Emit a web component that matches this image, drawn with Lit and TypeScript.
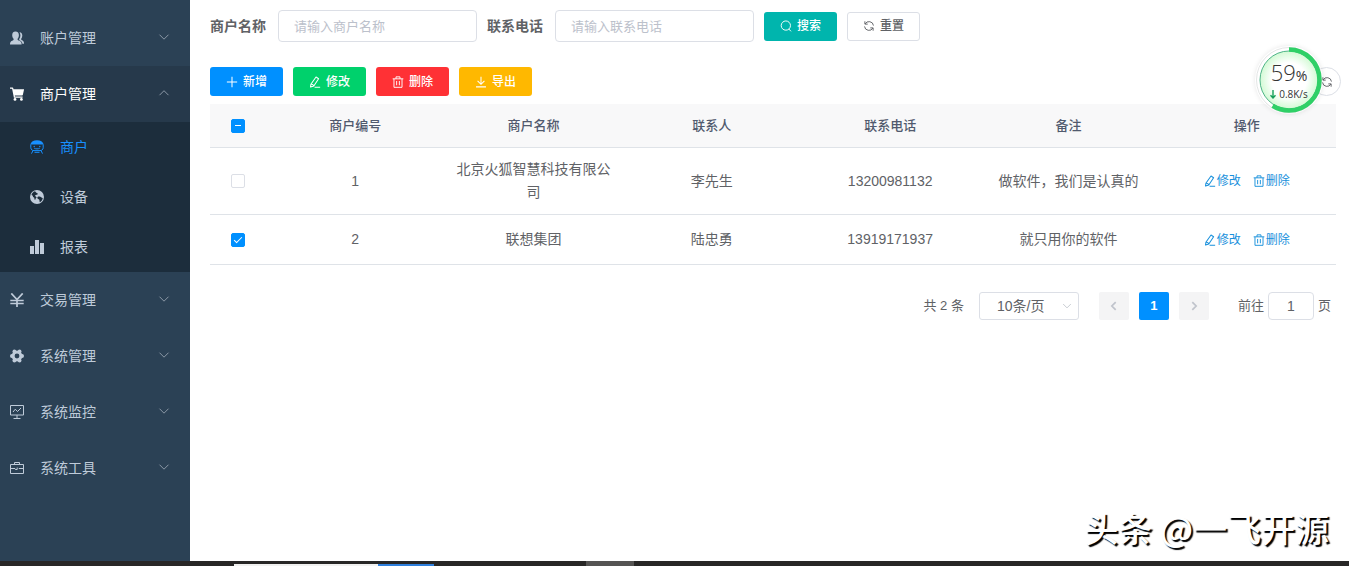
import { LitElement, html, css, svg, nothing } from "lit";
import { customElement, property, state } from "lit/decorators.js";

const icons: Record<string, unknown> = {
  user: svg`<g fill="currentColor"><path d="M5.500.5C7.700.5 9 2.100 8.900 4.400 8.800 5.900 8.200 6.900 7.600 7.700v1.100c0 .5 3 1.100 3.600 2.400.4.800.4 1.600.4 2.300H0c0-.7 0-1.500.4-2.300C1 9.900 3.600 9.300 3.600 8.800V7.700C2.900 6.900 2.300 5.900 2.200 4.400 2.100 2.100 3.300.5 5.500.5z"/><path d="M9.500 1.200c1.900.1 2.900 1.500 2.800 3.600-.1 1.300-.5 2.200-1.100 2.900v.9c0 .5 2.100 1 2.500 2.200.3.700.3 1.400.3 2h-1.600c-.1-1.900-1.500-3-3.200-3.600V8.100c.8-1 1.200-2.100 1.200-3.500 0-1.400-.3-2.500-.9-3.400z"/></g>`,
  cart: svg`<g fill="currentColor"><path d="M0 .5h2.600c.3 0 .5.200.6.500L3.500 2.300H13.800c.2 0 .3.200.2.400L12.800 8c-.1.300-.3.500-.6.500H4.800l.2 1h7.600v1.300H3.900L2.100 1.800H0z"/><circle cx="5" cy="12.400" r="1.400"/><circle cx="11.400" cy="12.400" r="1.400"/></g>`,
  train: svg`<path fill="currentColor" d="M.3 4.600C1 1.700 3.500.2 7 .2s6 1.500 6.700 4.400z"/><g fill="none" stroke="currentColor" stroke-width="1"><path d="M.8 4.500v3.200C.9 9.700 2.300 10.600 4 10.600h6c1.700 0 3.100-.9 3.200-2.900V4.500M4.300 8.300c1.600.8 3.800.8 5.400 0M3 10.600l-1.500 3M11 10.600l1.500 3M4.500 12.300h5"/></g><circle cx="4.200" cy="6.500" r=".7" fill="currentColor"/><circle cx="9.800" cy="6.500" r=".7" fill="currentColor"/>`,
  globe: svg`<path fill="currentColor" fill-rule="evenodd" d="M7 0a7 7 0 1 1 0 14A7 7 0 0 1 7 0zM5 1.300C3.200 1.900 1.900 3.300 1.500 5c1 .2 1.700 1 1.500 2 .9.200 1.500.8 1.400 1.700-.1.600.3 1 .7 1.300.5-1.200.6-2 1.600-2.600C5.500 6.500 5 6 5.300 5.100c.8-.3 2-.2 2.600-1.200C7.400 3.100 6.200 3 5 1.300zM9.500 6.600c-1.300-.3-2.300.3-2.200 1.500.1 1 1.400 1.200 2 1.600.4.900 0 1.900.6 2.600 1.600-.8 2.600-2.400 2.900-4.200-1 .2-1.900-1.200-3.300-1.500z"/>`,
  bars: svg`<path fill="currentColor" d="M0 6h4v8H0zM5 0h4v14H5zM10 3h4v11h-4z"/>`,
  yen: svg`<path fill="none" stroke="currentColor" stroke-width="1.700" d="M1.300.4 7 6.500 12.700.4M7 6.500V14"/><path fill="none" stroke="currentColor" stroke-width="1.300" d="M.3 7.500h13.400M.3 10.500h13.400"/>`,
  gear: svg`<circle cx="7" cy="7" r="3.900" fill="none" stroke="currentColor" stroke-width="3"/><g fill="currentColor"><circle cx="1.900" cy="7" r="1.900"/><circle cx="12.100" cy="7" r="1.900"/><circle cx="4.400" cy="2.500" r="1.900"/><circle cx="9.600" cy="2.500" r="1.900"/><circle cx="4.400" cy="11.500" r="1.900"/><circle cx="9.600" cy="11.500" r="1.900"/></g>`,
  monitor: svg`<path fill="none" stroke="currentColor" d="M.5.5h13v9.500H.5zM7 10v3M3.500 13.500h7M3 7l2.300-2.800L7.500 6.500 11 3"/>`,
  toolbox: svg`<path fill="none" stroke="currentColor" d="M.5 3.500h13v9H.5zM4.500 3.500v-2h5v2M.5 7.500h4.700M8.800 7.500h4.700M5.200 8.500h2V6.500"/>`,
  down: svg`<path fill="none" stroke="currentColor" d="M2.500 4.700 7 9.200l4.500-4.500"/>`,
  up: svg`<path fill="none" stroke="currentColor" d="M2.500 9.200 7 4.700l4.500 4.500"/>`,
  left: svg`<path fill="none" stroke="currentColor" stroke-width="2" d="M9 2.500 4.500 7 9 11.500"/>`,
  right: svg`<path fill="none" stroke="currentColor" stroke-width="2" d="M5 2.500 9.500 7 5 11.500"/>`,
  search: svg`<g fill="none" stroke="currentColor" stroke-width="1.100"><circle cx="6.800" cy="6.500" r="5.400"/><path d="m10.300 10.500 2.500 2.700"/></g>`,
  refresh: svg`<g fill="none" stroke="currentColor" stroke-width="1.100"><path d="M2.200 1.500v3.300h3.300M2.400 4.700A5.200 5.200 0 0 1 12.200 6.500M11.800 12.500V9.200H8.500M11.600 9.300A5.200 5.200 0 0 1 1.800 7.500"/></g>`,
  plus: svg`<path fill="none" stroke="currentColor" stroke-width="1.200" d="M7 1v12M1 7h12"/>`,
  edit: svg`<path fill="none" stroke="currentColor" stroke-width="1.200" stroke-linejoin="round" d="M8.200 1.200 11.200 3.200 5.600 11.600 1.800 12.900 2.200 9.600zM2.200 9.600c1.700-.3 2.900.6 3.400 2M6.500 13.100H13"/>`,
  trash: svg`<path fill="none" stroke="currentColor" stroke-width="1.100" d="M.8 3.300h12.400M2.300 3.300v9.900h9.400V3.300M4.700 3.300V1h4.600v2.300M5.400 5.800v5M8.600 5.800v5"/>`,
  download: svg`<path fill="none" stroke="currentColor" stroke-width="1.200" d="M7 1v8.500M3 5.700l4 4 4-4M1.200 12.700h11.600"/>`,
};

const icon = (name: string, size = 14) => html`<svg
  class="icon" width=${size} height=${size} viewBox="0 0 14 14" aria-hidden="true">${icons[name]}</svg>`;

const fontStack = css`"Liberation Sans", "Noto Sans CJK SC", sans-serif`;

interface MenuEntry {
  icon: string;
  label: string;
  open?: boolean;
  children?: { icon: string; label: string; active?: boolean }[];
}

@customElement("side-menu")
class SideMenu extends LitElement {
  static styles = css`
    :host {
      display: block;
      flex: none;
      width: 190px;
      padding-top: 10px;
      box-sizing: border-box;
      background: #2b4155;
      color: #bfcbd9;
      font: 14px/20px ${fontStack};
    }
    .icon { display: block; flex: none; }
    .title {
      display: flex;
      align-items: center;
      width: 100%;
      height: 56px;
      padding: 0 19px 0 10px;
      border: 0;
      background: none;
      color: inherit;
      font: inherit;
      text-align: left;
      cursor: pointer;
    }
    .title.open { background: #26394b; color: #fff; }
    .label { flex: 1; padding-left: 16px; }
    .arrow { color: #8b98a6; padding-bottom: 2px; }
    .sub { background: #1c2d3c; }
    .link {
      display: flex;
      align-items: center;
      height: 50px;
      padding-left: 30px;
      color: inherit;
      text-decoration: none;
    }
    .link.active { color: #1890ff; }
  `;

  @state() private entries: MenuEntry[] = [
    { icon: "user", label: "账户管理" },
    {
      icon: "cart",
      label: "商户管理",
      open: true,
      children: [
        { icon: "train", label: "商户", active: true },
        { icon: "globe", label: "设备" },
        { icon: "bars", label: "报表" },
      ],
    },
    { icon: "yen", label: "交易管理" },
    { icon: "gear", label: "系统管理" },
    { icon: "monitor", label: "系统监控" },
    { icon: "toolbox", label: "系统工具" },
  ];

  private toggle(entry: MenuEntry) {
    this.entries = this.entries.map((e) => (e === entry ? { ...e, open: !e.open } : e));
  }

  render() {
    return html`<nav>
      ${this.entries.map(
        (e) => html`
          <button class="title ${e.open ? "open" : ""}" aria-expanded=${e.open ? "true" : "false"} @click=${() => this.toggle(e)}>
            ${icon(e.icon)}<span class="label">${e.label}</span>
            <span class="arrow">${icon(e.open ? "up" : "down", 14)}</span>
          </button>
          ${e.open && e.children
            ? html`<div class="sub">
                ${e.children.map(
                  (c) => html`<a class="link ${c.active ? "active" : ""}" href="#">${icon(c.icon)}<span class="label">${c.label}</span></a>`
                )}
              </div>`
            : nothing}
        `
      )}
    </nav>`;
  }
}

@customElement("speed-ball")
class SpeedBall extends LitElement {
  @property({ type: Number }) percent = 59;
  @property() rate = "0.8K/s";

  static styles = css`
    :host { display: grid; width: 68px; height: 68px; border-radius: 50%; box-shadow: 0 0 5px rgba(0, 0, 0, 0.1); font-family: "Open Sans", "Noto Sans", sans-serif; color: #333; }
    .ring, .text { grid-area: 1 / 1; }
    .text { display: flex; flex-direction: column; align-items: center; padding-top: 14px; }
    .value { font-size: 22px; line-height: 24px; font-weight: 300; }
    .unit { font-size: 14px; font-weight: 400; }
    .rate { display: flex; align-items: center; gap: 3px; font-size: 10px; line-height: 12px; }
  `;

  render() {
    return html`
      <svg class="ring" width="68" height="68" viewBox="0 0 68 68" aria-hidden="true">
        <defs>
          <radialGradient id="glow">
            <stop offset="0.6" stop-color="#ffffff" />
            <stop offset="1" stop-color="#d2fad4" />
          </radialGradient>
        </defs>
        <circle cx="34" cy="34" r="32.500" fill="#fff" stroke="#e3e5e5" />
        <circle cx="34" cy="34" r="29" fill="url(#glow)" stroke="#4fb488" />
        <circle cx="34" cy="34" r="30.500" fill="none" stroke="#2fd067" stroke-width="4.500"
          pathLength="100" stroke-dasharray="${this.percent} 100" transform="rotate(-90 34 34)" />
      </svg>
      <div class="text">
        <span class="value">${this.percent}<span class="unit">%</span></span>
        <span class="rate">
          <svg width="6" height="9" viewBox="0 0 6 9" aria-hidden="true"><path d="M3 0v8M.5 5.200 3 8l2.500-2.800" fill="none" stroke="#15a05a" stroke-width="1.400" /></svg>
          ${this.rate}
        </span>
      </div>
    `;
  }
}

interface Merchant {
  id: number;
  name: string;
  contact: string;
  phone: string;
  note: string;
  checked: boolean;
}

@customElement("merchant-page")
class MerchantPage extends LitElement {
  static styles = css`
    :host {
      display: block;
      flex: 1;
      min-width: 0;
      box-sizing: border-box;
      padding: 10px 8px 0 20px;
      background: #fff;
      color: #606266;
      font: 14px/20px ${fontStack};
    }
    .icon { display: block; flex: none; }
    .search { display: flex; align-items: center; gap: 10px; height: 32px; }
    .field { display: flex; align-items: center; gap: 12px; }
    .field label { font-weight: 700; }
    .field input {
      box-sizing: border-box;
      width: 199px;
      height: 32px;
      padding: 0 15px;
      border: 1px solid #dcdfe6;
      border-radius: 4px;
      font: 13px/20px ${fontStack};
      color: inherit;
    }
    input::placeholder { color: #bcc1cb; opacity: 1; }
    .btn {
      display: inline-flex;
      align-items: center;
      justify-content: center;
      gap: 5px;
      box-sizing: border-box;
      width: 73px;
      height: 29px;
      padding: 0;
      border: 0;
      border-radius: 3px;
      font: 500 12px/16px ${fontStack};
      color: #fff;
      cursor: pointer;
    }
    .teal { background: #00b5ad; }
    .plain { background: #fff; color: #606266; border: 1px solid #dcdfe6; }
    .blue { background: #0090ff; }
    .green { background: #00d16c; }
    .red { background: #ff3135; }
    .amber { background: #ffb800; }
    .tools { display: flex; gap: 10px; margin: 25px 0 8px; position: relative; }
    .round {
      display: flex;
      align-items: center;
      justify-content: center;
      box-sizing: border-box;
      width: 29px;
      height: 29px;
      margin-left: auto;
      padding: 0;
      border: 1px solid #dcdfe6;
      border-radius: 50%;
      background: #fff;
      color: #606266;
    }
    .ball { position: absolute; right: 18px; top: -21px; }
    .list { padding-right: 5px; }
    table { width: 100%; border-collapse: separate; border-spacing: 0; table-layout: fixed; }
    .pick { width: 56px; }
    th, td { box-sizing: border-box; padding: 10px; border-bottom: 1px solid #dfe3e8; text-align: center; font-weight: 400; line-height: 23px; }
    th { height: 44px; background: #f8f8f9; color: #515a6e; font-size: 13px; font-weight: 500; }
    td { height: 50px; }
    .box {
      appearance: none;
      display: block;
      box-sizing: border-box;
      width: 14px;
      height: 14px;
      margin: 0 auto;
      border: 1px solid #dcdfe6;
      border-radius: 2px;
      background: #fff;
    }
    .box:checked, .box:indeterminate { border-color: #0090ff; background: #0090ff; }
    .box:checked::after {
      content: "";
      display: block;
      width: 3px;
      height: 7px;
      margin: 1px 0 0 4px;
      border: solid #fff;
      border-width: 0 1px 1px 0;
      transform: rotate(45deg);
    }
    .box:indeterminate::after { content: ""; display: block; width: 6px; height: 1px; margin: 5px 3px; background: #fff; }
    .ops { display: flex; justify-content: center; gap: 12px; }
    .op {
      display: flex;
      align-items: center;
      gap: 1px;
      padding: 0;
      border: 0;
      background: none;
      color: #1890dc;
      font: 12px/16px ${fontStack};
      cursor: pointer;
    }
    .pager { display: flex; align-items: center; justify-content: flex-end; gap: 10px; height: 28px; margin-top: 27px; padding-right: 5px; font-size: 13px; }
    .size { display: grid; align-items: center; width: 100px; margin: 0 10px 0 5px; }
    .size select {
      grid-area: 1 / 1;
      appearance: none;
      box-sizing: border-box;
      height: 28px;
      padding: 0 17px;
      border: 1px solid #dcdfe6;
      border-radius: 3px;
      background: #fff;
      color: #606266;
      font: 14px/20px ${fontStack};
    }
    .size .icon { grid-area: 1 / 1; justify-self: end; margin-right: 6px; color: #c0c4cc; pointer-events: none; }
    .page {
      display: flex;
      align-items: center;
      justify-content: center;
      width: 30px;
      height: 28px;
      padding: 0;
      border: 0;
      border-radius: 2px;
      background: #f4f4f5;
      color: #c0c4cc;
      font: 700 13px/20px ${fontStack};
    }
    .page.current { background: #0090ff; color: #fff; }
    .jump { display: flex; align-items: center; margin-left: 19px; }
    .jump label { display: flex; align-items: center; gap: 4px; }
    .jump input {
      box-sizing: border-box;
      width: 46px;
      height: 28px;
      padding: 0 3px;
      border: 1px solid #dcdfe6;
      border-radius: 4px;
      text-align: center;
      color: #606266;
      font: 14px/20px ${fontStack};
    }
  `;

  @state() private rows: Merchant[] = [
    { id: 1, name: "北京火狐智慧科技有限公司", contact: "李先生", phone: "13200981132", note: "做软件，我们是认真的", checked: false },
    { id: 2, name: "联想集团", contact: "陆忠勇", phone: "13919171937", note: "就只用你的软件", checked: true },
  ];

  private toggleRow(row: Merchant) {
    this.rows = this.rows.map((r) => (r === row ? { ...r, checked: !r.checked } : r));
  }

  private toggleAll(e: Event) {
    const checked = (e.target as HTMLInputElement).checked;
    this.rows = this.rows.map((r) => ({ ...r, checked }));
  }

  render() {
    const count = this.rows.filter((r) => r.checked).length;
    const all = count === this.rows.length;
    return html`
      <form class="search" @submit=${(e: Event) => e.preventDefault()}>
        <div class="field"><label for="name">商户名称</label><input id="name" placeholder="请输入商户名称" /></div>
        <div class="field"><label for="phone">联系电话</label><input id="phone" placeholder="请输入联系电话" /></div>
        <button class="btn teal">${icon("search", 12)}搜索</button>
        <button class="btn plain" type="reset">${icon("refresh", 12)}重置</button>
      </form>

      <div class="tools">
        <button class="btn blue">${icon("plus", 12)}新增</button>
        <button class="btn green">${icon("edit", 12)}修改</button>
        <button class="btn red">${icon("trash", 12)}删除</button>
        <button class="btn amber">${icon("download", 12)}导出</button>
        <button class="round" aria-label="刷新">${icon("refresh", 12)}</button>
        <speed-ball class="ball"></speed-ball>
      </div>

      <div class="list">
        <table>
          <thead>
            <tr>
              <th class="pick">
                <input class="box" type="checkbox" aria-label="全选" .checked=${all} .indeterminate=${count > 0 && !all} @change=${this.toggleAll} />
              </th>
              ${["商户编号", "商户名称", "联系人", "联系电话", "备注", "操作"].map((h) => html`<th>${h}</th>`)}
            </tr>
          </thead>
          <tbody>
            ${this.rows.map(
              (r) => html`<tr>
                <td><input class="box" type="checkbox" aria-label=${r.name} .checked=${r.checked} @change=${() => this.toggleRow(r)} /></td>
                <td>${r.id}</td>
                <td>${r.name}</td>
                <td>${r.contact}</td>
                <td>${r.phone}</td>
                <td>${r.note}</td>
                <td>
                  <div class="ops">
                    <button class="op">${icon("edit", 12)}修改</button>
                    <button class="op">${icon("trash", 12)}删除</button>
                  </div>
                </td>
              </tr>`
            )}
          </tbody>
        </table>

        <div class="pager">
          <span>共 ${this.rows.length} 条</span>
          <div class="size">
            <select aria-label="每页条数">
              <option>10条/页</option>
              <option>20条/页</option>
            </select>
            ${icon("down", 12)}
          </div>
          <button class="page" disabled aria-label="上一页">${icon("left", 12)}</button>
          <button class="page current">1</button>
          <button class="page" disabled aria-label="下一页">${icon("right", 12)}</button>
          <div class="jump"><label>前往<input .value=${"1"} />页</label></div>
        </div>
      </div>
    `;
  }
}

@customElement("app-root")
class AppRoot extends LitElement {
  static styles = css`
    :host { display: flex; flex-direction: column; min-height: 100vh; position: relative; font-family: ${fontStack}; }
    .body { display: flex; flex: 1; }
    .taskbar { display: flex; align-items: flex-end; height: 5px; padding-left: 234px; background: #282726; }
    .window { width: 144px; height: 2px; background: #f1f1f0; }
    .active { width: 56px; height: 2px; background: #2f7fdc; }
    .idle { width: 48px; height: 5px; margin-left: 152px; background: #555453; }
    .watermark {
      position: absolute;
      right: 20px;
      bottom: 16px;
      color: #fff;
      font-size: 34px;
      line-height: 44px;
      font-weight: 500;
      font-family: "Noto Sans CJK SC", sans-serif;
      text-shadow: 2px 2px 1px #000;
      pointer-events: none;
    }
  `;

  render() {
    return html`
      <div class="body">
        <side-menu></side-menu>
        <merchant-page></merchant-page>
      </div>
      <div class="taskbar">
        <span class="window"></span><span class="active"></span><span class="idle"></span>
      </div>
      <div class="watermark">头条 @一飞开源</div>
    `;
  }
}
